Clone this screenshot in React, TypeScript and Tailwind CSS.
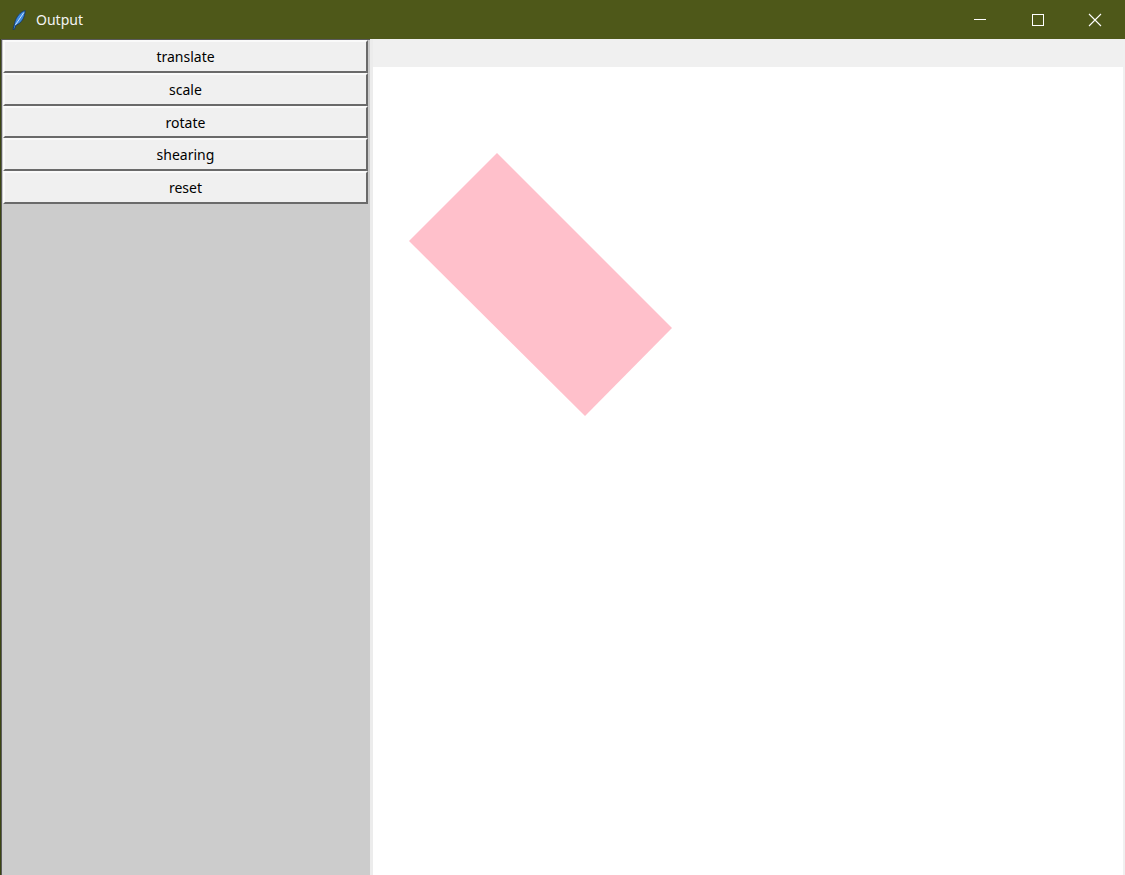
import React from "react";

const buttons: { label: string; h: string }[] = [
  { label: "translate", h: "h-[33px]" },
  { label: "scale", h: "h-[33px]" },
  { label: "rotate", h: "h-[32px]" },
  { label: "shearing", h: "h-[33px]" },
  { label: "reset", h: "h-[33px]" },
];

export default function App() {
  return (
    <div
      className="w-[1125px] h-[875px] flex flex-col overflow-hidden bg-[#f0f0f0]"
      style={{ fontFamily: '"Noto Sans", "Liberation Sans", sans-serif' }}
    >
      {/* Title bar */}
      <div className="h-[39px] shrink-0 bg-[#4e5819] flex items-center text-white">
        <div className="w-[36px] flex items-center justify-center pl-[2px]">
          <svg width="14" height="20" viewBox="0 0 14 20">
            <path
              d="M13.2 0.6 C 8.5 1.6, 3.8 7, 2.6 13.2 L 1 19.4 L 2.3 19.6 L 4 15.2 C 9.5 13.2, 12.8 8, 13.2 0.6 Z"
              fill="#3d8ae0"
              stroke="#183a60"
              strokeWidth="0.9"
            />
            <path d="M11.8 2.6 L 3.4 15" stroke="#d6ebff" strokeWidth="0.9" />
          </svg>
        </div>
        <span className="text-[14px] leading-none text-[#f4f4f4]">Output</span>
        <div className="ml-auto flex h-full items-center">
          <div className="w-[58px] h-full flex items-center justify-center">
            <div className="w-[12px] h-px bg-white" />
          </div>
          <div className="w-[58px] h-full flex items-center justify-center">
            <div className="w-[12px] h-[12px] border border-white" />
          </div>
          <div className="w-[58px] h-full flex items-center justify-center pr-[2px]">
            <svg width="14" height="14" viewBox="0 0 14 14">
              <path d="M1 1 L13 13 M13 1 L1 13" stroke="white" strokeWidth="1.1" />
            </svg>
          </div>
        </div>
      </div>

      {/* Body */}
      <div className="flex-1 flex">
        {/* Left panel */}
        <div className="w-[370px] shrink-0 bg-[#cccccc] border-l border-l-[#3b4511] flex">
          <div className="flex-1 border-l border-t border-l-[#5a5a5a] border-t-[#5a5a5a] pl-px">
            <div className="w-[365px] flex flex-col">
              {buttons.map((b) => (
                <div
                  key={b.label}
                  className={`${b.h} bg-[#f0f0f0] border-2 border-t-[#fafafa] border-l-[#fafafa] border-b-[#6a6a6a] border-r-[#6a6a6a] flex items-center justify-center pt-px text-[14px] text-black leading-none`}
                >
                  {b.label}
                </div>
              ))}
            </div>
          </div>
        </div>

        {/* Separator */}
        <div className="w-[3px] shrink-0 bg-[#ececec]" />

        {/* Canvas area */}
        <div className="flex-1 flex flex-col">
          <div className="h-[28px] shrink-0 bg-[#f0f0f0]" />
          <div className="flex-1 flex">
            <div className="w-[750px] h-full bg-white">
              <svg width="750" height="808" viewBox="0 0 750 808">
                <polygon points="124,86 299,261 212,349 36,174" fill="#ffc0cb" />
              </svg>
            </div>
            <div className="flex-1 bg-[#f0f0f0]" />
          </div>
        </div>
      </div>
    </div>
  );
}
